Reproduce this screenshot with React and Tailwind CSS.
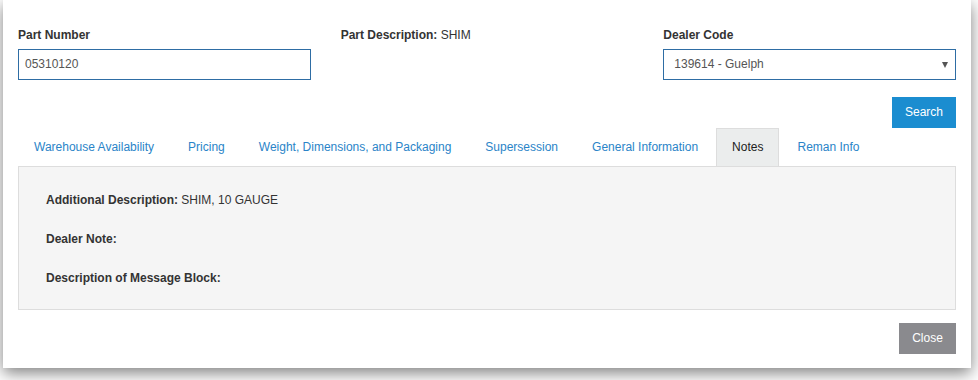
import React from "react";

const tabs = [
  "Warehouse Availability",
  "Pricing",
  "Weight, Dimensions, and Packaging",
  "Supersession",
  "General Information",
  "Notes",
  "Reman Info",
];

export default function App() {
  const active = "Notes";
  return (
    <div className="w-[978px] h-[380px] bg-white overflow-hidden pl-[3px] font-['Liberation_Sans',Arial,sans-serif] text-[12px] leading-[17px] text-[#333]">
      <div className="w-[968px] h-[368px] bg-white shadow-[0_5px_15px_rgba(0,0,0,0.5)] pt-[27px]">
        {/* search fields */}
        <div className="grid grid-cols-3">
          <div className="px-[15px]">
            <div className="font-bold mb-[5px]">Part Number</div>
            <div className="h-[31px] border border-[#2e6da4] px-[6px] flex items-center text-[#555]">
              05310120
            </div>
          </div>
          <div className="px-[15px]">
            <span className="font-bold">Part Description:</span> SHIM
          </div>
          <div className="px-[15px]">
            <div className="font-bold mb-[5px]">Dealer Code</div>
            <div className="h-[31px] border border-[#2e6da4] pl-[10px] pr-[7px] flex items-center justify-between text-[#555]">
              <span>139614 - Guelph</span>
              <span className="w-0 h-0 border-l-[3px] border-r-[3px] border-t-[6px] border-l-transparent border-r-transparent border-t-[#555]" />
            </div>
          </div>
        </div>

        <div className="px-[15px]">
          <div className="flex justify-end mt-[17px]">
            <button className="h-[31px] w-[64px] bg-[#1b8dd0] text-white text-[12px]">
              Search
            </button>
          </div>

          {/* tabs */}
          <div className="flex">
            {tabs.map((t) => (
              <div
                key={t}
                className={`h-[38px] px-[15px] py-[10px] mr-[2px] border border-b-0 ${
                  t === active
                    ? "bg-[#ebeded] border-[#ddd] text-[#222]"
                    : "border-transparent text-[#2a84c8]"
                }`}
              >
                {t}
              </div>
            ))}
          </div>

          {/* notes panel */}
          <div className="h-[144px] bg-[#f5f5f5] border border-[#ddd] pl-[27px] pt-[25px] flex flex-col gap-[22px]">
            <div>
              <span className="font-bold">Additional Description:</span> SHIM, 10 GAUGE
            </div>
            <div className="font-bold">Dealer Note:</div>
            <div className="font-bold">Description of Message Block:</div>
          </div>

          <div className="flex justify-end mt-[13px]">
            <button className="h-[31px] w-[57px] bg-[#8a8a8e] text-white text-[12px]">
              Close
            </button>
          </div>
        </div>
      </div>
    </div>
  );
}
